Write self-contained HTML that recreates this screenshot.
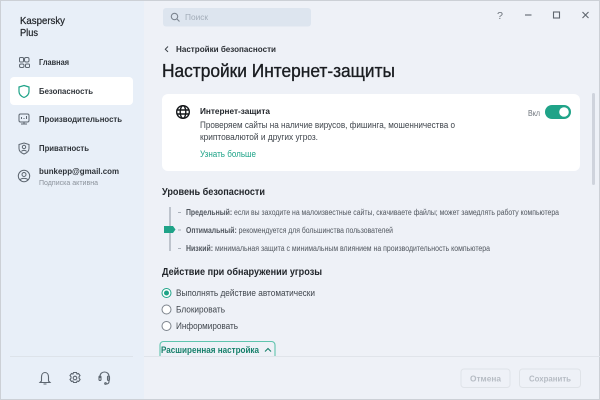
<!DOCTYPE html>
<html lang="ru"><head><meta charset="utf-8"><title>Настройки Интернет-защиты</title>
<style>
html,body{margin:0;padding:0;width:600px;height:400px;overflow:hidden;background:#eef1f7}
svg{display:block;filter:blur(.35px)}
text{font-family:"Liberation Sans","Noto Sans CJK SC",sans-serif}
.b{font-weight:700}
.m{stroke:currentColor;stroke-width:.22px}
</style></head><body>
<svg width="600" height="400" viewBox="0 0 600 400" xmlns="http://www.w3.org/2000/svg">
<rect width="600" height="400" fill="#eef1f7"/>
<rect width="144" height="400" fill="#e8eff8"/>
<rect x="0" y="0" width="600" height="1" fill="#ccd0d6"/>
<rect x="0" y="399" width="600" height="1" fill="#ccd0d6"/>
<rect x="0" y="0" width="1" height="400" fill="#ccd0d6"/>
<rect x="599" y="0" width="1" height="400" fill="#ccd0d6"/>

<text x="20" y="24" font-size="10" fill="#1f2328" color="#1f2328" class="m" textLength="45" lengthAdjust="spacingAndGlyphs">Kaspersky</text>
<text x="20" y="36" font-size="10" fill="#1f2328" color="#1f2328" class="m" textLength="18" lengthAdjust="spacingAndGlyphs">Plus</text>

<rect x="10" y="77" width="123" height="28" rx="4" fill="#fff"/>

<g fill="none" stroke="#5d6670" stroke-width="1">
<rect x="19.500" y="57.500" width="4" height="4.500" rx="1"/><rect x="24.500" y="57.500" width="4.500" height="4.500" rx="1.500"/>
<rect x="19.500" y="64" width="4.500" height="3.500" rx="1.500"/><rect x="25.500" y="64" width="4" height="3.500" rx="1"/>
<path d="M24 85.500l5 1.500v4.500c0 3-2.500 5-5 6-2.500-1-5-3-5-6V87z" stroke="#1fa388" stroke-width="1.200"/>
<rect x="19" y="114" width="10" height="8" rx="1.500"/><path d="M21 124h6M24 122v2M21.500 119v-2M24 119v-1M26.500 119v-3"/>
<path d="M24 143l5 1.500v4c0 2.700-2.300 4.500-5 5.500-2.700-1-5-2.800-5-5.500v-4z"/><circle cx="24" cy="147" r="1.700"/><path d="M21.500 151.500c.5-1.500 4.500-1.500 5 0"/>
<circle cx="24" cy="176" r="5.700"/><circle cx="24" cy="174.500" r="2"/><path d="M20 180c1-2.200 7-2.200 8 0"/>
</g>

<text x="39" y="65" font-size="8.500" class="b" fill="#2e3339" textLength="30" lengthAdjust="spacingAndGlyphs">Главная</text>
<text x="39" y="94" font-size="8.500" class="b" fill="#2e3339" textLength="54" lengthAdjust="spacingAndGlyphs">Безопасность</text>
<text x="39" y="122" font-size="8.500" class="b" fill="#2e3339" textLength="83" lengthAdjust="spacingAndGlyphs">Производительность</text>
<text x="39" y="151" font-size="8.500" class="b" fill="#2e3339" textLength="50" lengthAdjust="spacingAndGlyphs">Приватность</text>
<text x="39" y="174" font-size="8.500" class="b" fill="#2e3339" textLength="80" lengthAdjust="spacingAndGlyphs">bunkepp@gmail.com</text>
<text x="39" y="185" font-size="7.500" fill="#8b929b" textLength="59" lengthAdjust="spacingAndGlyphs">Подписка активна</text>

<rect x="10" y="356" width="123" height="1" fill="#dde3ea"/>
<rect x="144" y="356" width="456" height="1" fill="#e0e4ea"/>

<g fill="none" stroke="#5d6670" stroke-width="1.100">
<path d="M41.500 381v-4c0-2.800 1.500-4.500 3.500-4.500s3.500 1.700 3.500 4.500v4l1.500 1.500H40zM43.500 384h3"/>
<circle cx="75" cy="378" r="1.800"/><path d="M73.500 372.500h3l.5 1.500 1.500-.5 1.500 2-1 1.300.1 1.400 1 1.300-1.500 2-1.500-.5-.6 1.500h-3l-.5-1.500-1.500.5-1.500-2 1-1.300v-1.400l-1-1.300 1.500-2 1.500.5z"/>
<path d="M100 378v-1.500c0-2.800 2-4.500 4.500-4.500s4.500 1.700 4.500 4.500v5c0 1.500-1 2.500-3 2.500"/><rect x="99" y="376" width="2" height="4.500" rx="1"/><rect x="107.500" y="376" width="2" height="4.500" rx="1"/><circle cx="105.500" cy="383.500" r=".8"/>
</g>

<rect x="163" y="8" width="148" height="18.500" rx="3" fill="#dde5ef"/>
<g fill="none" stroke="#7c8590" stroke-width="1.100"><circle cx="174.500" cy="16.500" r="3.200"/><path d="M177 19l2.500 2.500"/></g>
<text x="185" y="20" font-size="8.500" fill="#a3adb9" textLength="23" lengthAdjust="spacingAndGlyphs">Поиск</text>

<text x="497" y="19" font-size="10" fill="#6d747c" textLength="6" lengthAdjust="spacingAndGlyphs">?</text>
<g fill="none" stroke="#5f666e" stroke-width="1.100"><path d="M525 15h6.500"/><rect x="553.500" y="12" width="6" height="6"/><path d="M582.500 12l6 6M588.500 12l-6 6"/></g>

<path d="M168 46.500l-2.700 2.700 2.700 2.700" fill="none" stroke="#3b4148" stroke-width="1"/>
<text x="176" y="52" font-size="8.500" class="b" fill="#2a2e33" textLength="100" lengthAdjust="spacingAndGlyphs">Настройки безопасности</text>
<text x="162" y="77" font-size="18" fill="#1a1d21" color="#1a1d21" style="stroke:currentColor;stroke-width:.35px" textLength="233" lengthAdjust="spacingAndGlyphs">Настройки Интернет-защиты</text>

<rect x="162" y="94" width="418" height="77" rx="6" fill="#fff"/>
<rect x="592" y="93" width="3" height="92" rx="1.500" fill="#cfd3dc"/>

<g fill="none" stroke="#15181b" stroke-width="1.400"><circle cx="183" cy="112" r="6.300"/><ellipse cx="183" cy="112" rx="2.800" ry="6.300"/><path d="M176.800 110h12.400M176.800 114h12.400"/></g>
<text x="200" y="114" font-size="8.500" class="b" fill="#23272c" textLength="70" lengthAdjust="spacingAndGlyphs">Интернет-защита</text>
<text x="200" y="128" font-size="9" fill="#40464d" textLength="255" lengthAdjust="spacingAndGlyphs">Проверяем сайты на наличие вирусов, фишинга, мошенничества о</text>
<text x="200" y="140" font-size="9" fill="#40464d" textLength="118" lengthAdjust="spacingAndGlyphs">криптовалютой и других угроз.</text>
<text x="200" y="157" font-size="9" fill="#1fa388" textLength="56" lengthAdjust="spacingAndGlyphs">Узнать больше</text>
<text x="528" y="116" font-size="8" fill="#6d747c" textLength="12" lengthAdjust="spacingAndGlyphs">Вкл</text>
<rect x="545" y="105" width="26" height="14" rx="7" fill="#1fa388"/>
<circle cx="564" cy="112" r="4.800" fill="#fff"/>

<text x="162" y="195" font-size="10" class="b" fill="#23272c" textLength="103" lengthAdjust="spacingAndGlyphs">Уровень безопасности</text>
<rect x="169.500" y="207" width="1" height="44" fill="#8e98a3"/>
<g fill="#aab1ba"><rect x="178" y="212" width="3" height="1"/><rect x="178" y="229.500" width="3" height="1"/><rect x="178" y="248" width="3" height="1"/></g>
<path d="M164 226h9l2.500 3.500-2.500 3.500h-9z" fill="#1fa388"/>
<text x="186" y="215" font-size="8" fill="#50565e" textLength="373" lengthAdjust="spacingAndGlyphs"><tspan class="b">Предельный:</tspan> если вы заходите на малоизвестные сайты, скачиваете файлы; может замедлять работу компьютера</text>
<text x="186" y="233" font-size="8" fill="#50565e" textLength="207" lengthAdjust="spacingAndGlyphs"><tspan class="b">Оптимальный:</tspan> рекомендуется для большинства пользователей</text>
<text x="186" y="251" font-size="8" fill="#50565e" textLength="304" lengthAdjust="spacingAndGlyphs"><tspan class="b">Низкий:</tspan> минимальная защита с минимальным влиянием на производительность компьютера</text>

<text x="162" y="275" font-size="10" class="b" fill="#23272c" textLength="160" lengthAdjust="spacingAndGlyphs">Действие при обнаружении угрозы</text>

<circle cx="166.500" cy="293" r="4.500" fill="#fff" stroke="#1fa388"/><circle cx="166.500" cy="293" r="2.500" fill="#1fa388"/>
<circle cx="166.500" cy="309.500" r="4.500" fill="#fff" stroke="#7c838c"/>
<circle cx="166.500" cy="326" r="4.500" fill="#fff" stroke="#7c838c"/>
<text x="176" y="296" font-size="9" fill="#40464d" textLength="139" lengthAdjust="spacingAndGlyphs">Выполнять действие автоматически</text>
<text x="176" y="312.500" font-size="9" fill="#40464d" textLength="49" lengthAdjust="spacingAndGlyphs">Блокировать</text>
<text x="176" y="329" font-size="9" fill="#40464d" textLength="62" lengthAdjust="spacingAndGlyphs">Информировать</text>

<path d="M160 356v-11c0-2 1.500-3.500 3.500-3.500h108c2 0 3.500 1.500 3.500 3.500v11" fill="none" stroke="#5fc4ae" stroke-width="1.100"/>
<text x="161" y="353" font-size="9" class="b" fill="#17806b" textLength="98" lengthAdjust="spacingAndGlyphs">Расширенная настройка</text>
<path d="M265 351.500l3-3 3 3" fill="none" stroke="#17806b" stroke-width="1.100"/>

<rect x="461" y="369" width="49" height="18.500" rx="3" fill="#eef1f7" stroke="#dfe3e8"/>
<rect x="519.500" y="369" width="61" height="18.500" rx="3" fill="#eef1f7" stroke="#dfe3e8"/>
<text x="470" y="381.500" font-size="8.500" class="b" fill="#b6bcc4" textLength="31" lengthAdjust="spacingAndGlyphs">Отмена</text>
<text x="529" y="381.500" font-size="8.500" class="b" fill="#b6bcc4" textLength="42" lengthAdjust="spacingAndGlyphs">Сохранить</text>
</svg>
</body></html>
